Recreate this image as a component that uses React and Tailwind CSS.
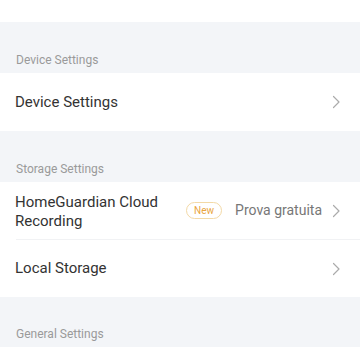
import React from 'react';

const Chevron = () => (
  <svg width="9" height="14" viewBox="0 0 9 14" fill="none" className="shrink-0">
    <path d="M1.5 1.5L7 7l-5.5 5.5" stroke="#ababab" strokeWidth="1.2" strokeLinecap="round" strokeLinejoin="round" />
  </svg>
);

const SectionLabel = ({ children, className = '' }) => (
  <div className={`bg-[#f3f5f8] px-4 flex items-end pb-[4px] text-[12px] text-[#9a9a9a] ${className}`}>
    {children}
  </div>
);

const Row = ({ title, right, className = '' }) => (
  <div className={`bg-white flex items-center pl-[15px] pr-[19px] ${className}`}>
    <div className="flex-1 text-[15px] leading-[19px] text-[#333]">{title}</div>
    {right}
    <Chevron />
  </div>
);

export default function App() {
  return (
    <div className="w-[360px] h-[360px] overflow-hidden bg-white" style={{ fontFamily: 'Roboto, "Noto Sans", sans-serif' }}>
      <div className="h-[22px] bg-white" />
      <SectionLabel className="h-[51px]">Device Settings</SectionLabel>
      <Row title="Device Settings" className="h-[58px]" />
      <SectionLabel className="h-[51px]">Storage Settings</SectionLabel>
      <Row
        title={<span className="block w-[160px] pt-[3px]">HomeGuardian Cloud Recording</span>}
        className="h-[57px]"
        right={
          <div className="flex items-center mr-[10px]">
            <span className="border border-[#f3d9a6] text-[#e9a53f] text-[10px] leading-[15px] px-[7px] rounded-full mr-[13px]">New</span>
            <span className="text-[14px] text-[#777]">Prova gratuita</span>
          </div>
        }
      />
      <div className="bg-white pl-[16px]">
        <div className="h-px bg-[#f1f2f4]" />
      </div>
      <Row title="Local Storage" className="h-[57px]" />
      <SectionLabel className="h-[50px]">General Settings</SectionLabel>
      <div className="h-[13px] bg-white" />
    </div>
  );
}
